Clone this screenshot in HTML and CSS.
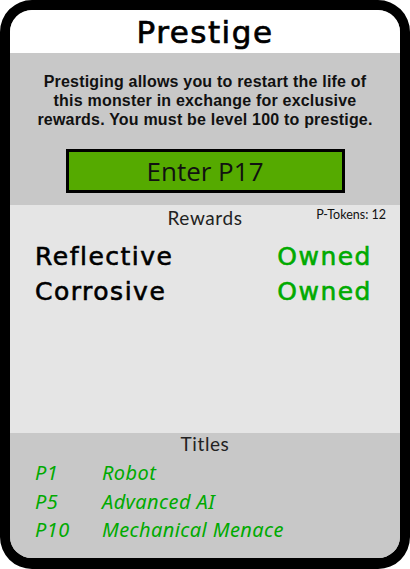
FILE: index.html
```html
<!DOCTYPE html>
<html>
<head>
<meta charset="utf-8">
<link rel="stylesheet" href="styles.css">
</head>
<body>
<div class="frame">
  <div class="header">Prestige</div>
  <div class="intro">
    <p class="desc">Prestiging allows you to restart the life of<br>this monster in exchange for exclusive<br>rewards. You must be level 100 to prestige.</p>
    <div class="btn">Enter P17</div>
  </div>
  <div class="rewards">
    <div class="rewards-head">
      <span class="section-title">Rewards</span>
      <span class="tokens">P-Tokens: 12</span>
    </div>
    <div class="reward-list">
      <div class="reward"><span class="name">Reflective</span><span class="owned">Owned</span></div>
      <div class="reward"><span class="name">Corrosive</span><span class="owned">Owned</span></div>
    </div>
  </div>
  <div class="titles">
    <div class="section-title center">Titles</div>
    <div class="title-list">
      <span>P1</span><span>Robot</span>
      <span>P5</span><span>Advanced AI</span>
      <span>P10</span><span>Mechanical Menace</span>
    </div>
  </div>
</div>
</body>
</html>
```

FILE: styles.css
```css
html, body {
  margin: 0;
  padding: 0;
  background: #ffffff;
}
.frame {
  width: 410px;
  height: 569px;
  box-sizing: border-box;
  border: 10px solid #000;
  border-bottom-width: 11px;
  border-radius: 32px;
  overflow: hidden;
  display: flex;
  flex-direction: column;
  background: #c8c8c8;
}
.header {
  height: 43px;
  background: #fff;
  text-align: center;
  font-family: "DejaVu Sans", sans-serif;
  font-size: 31px;
  line-height: 44px;
  color: #000;
  letter-spacing: 1.5px;
  -webkit-text-stroke: 0.7px #000;
}
.intro {
  height: 152px;
  background: #c8c8c8;
  display: flex;
  flex-direction: column;
  align-items: center;
}
.desc {
  margin: 19px 0 0;
  text-align: center;
  font-family: "Liberation Sans", Arial, sans-serif;
  font-weight: bold;
  font-size: 16px;
  letter-spacing: 0.2px;
  line-height: 19px;
  color: #111;
  white-space: nowrap;
}
.btn {
  margin-top: 20px;
  width: 279px;
  height: 44px;
  box-sizing: border-box;
  border: 3px solid #000;
  background: #55aa00;
  text-align: center;
  font-family: "Open Sans", sans-serif;
  font-size: 26px;
  line-height: 38px;
  color: #111;
}
.rewards {
  height: 228px;
  background: #e5e5e5;
  display: flex;
  flex-direction: column;
}
.rewards-head {
  position: relative;
  height: 26px;
  text-align: center;
}
.section-title {
  font-family: "Lato", sans-serif;
  font-size: 19px;
  letter-spacing: 0.6px;
  line-height: 26px;
  color: #222;
}
.center {
  display: block;
  text-align: center;
}
.tokens {
  position: absolute;
  right: 14px;
  top: 1px;
  font-family: "Lato", sans-serif;
  font-size: 12.5px;
  letter-spacing: 0;
  line-height: 18px;
  color: #111;
}
.reward-list {
  padding: 12px 28px 0 25px;
  display: flex;
  flex-direction: column;
  gap: 9px;
}
.reward {
  display: flex;
  justify-content: space-between;
  align-items: center;
  height: 26px;
  font-family: "DejaVu Sans", sans-serif;
  font-size: 25px;
  letter-spacing: 1.5px;
  -webkit-text-stroke: 0.6px currentColor;
}
.name { color: #000; }
.owned { color: #00aa00; }
.titles {
  flex: 1;
  background: #c8c8c8;
}
.titles .section-title {
  line-height: 22px;
}
.title-list {
  display: grid;
  grid-template-columns: 67px auto;
  row-gap: 4px;
  padding: 6px 0 0 25px;
  font-family: "Noto Sans", sans-serif;
  font-style: italic;
  font-size: 20px;
  letter-spacing: 0.4px;
  line-height: 24.5px;
  color: #00aa00;
}
```
